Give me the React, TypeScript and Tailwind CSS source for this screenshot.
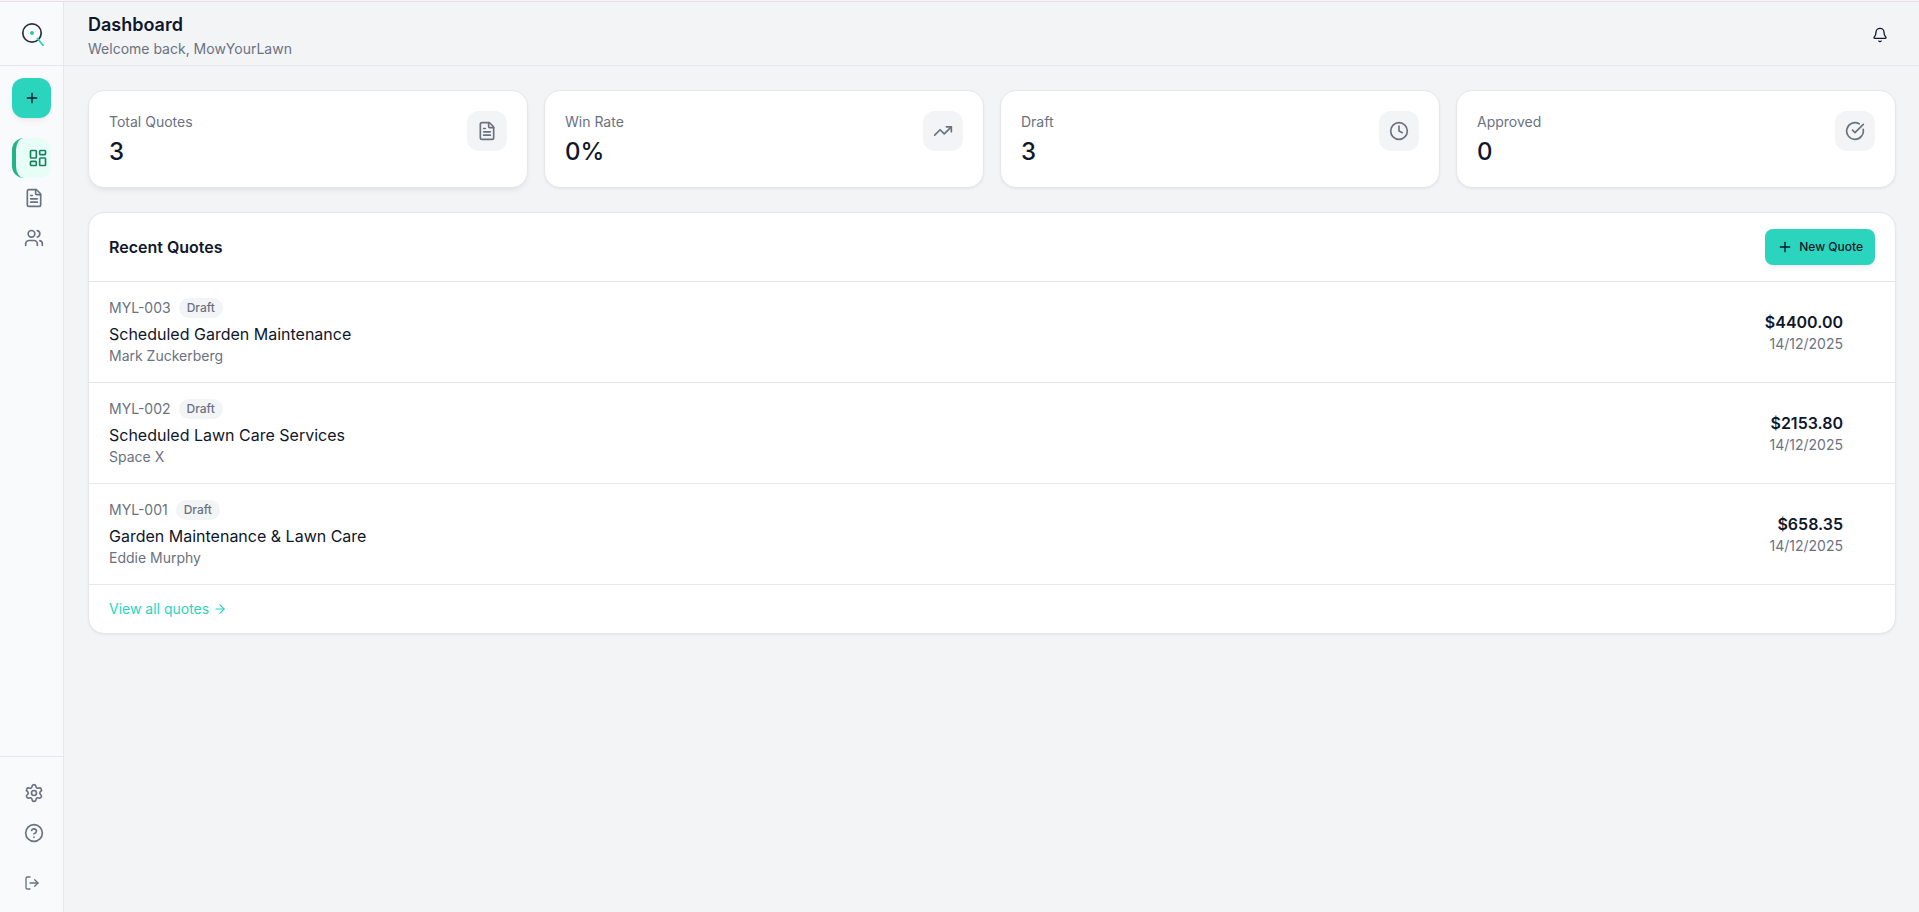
import React from 'react';
import {
  ArrowRight,
  Bell,
  CircleCheckBig,
  CircleHelp,
  Clock,
  FileText,
  LayoutDashboard,
  LogOut,
  Plus,
  Settings,
  TrendingUp,
  Users,
} from 'lucide-react';

const stats = [
  { label: 'Total Quotes', value: '3', icon: FileText, raised: true },
  { label: 'Win Rate', value: '0%', icon: TrendingUp, raised: false },
  { label: 'Draft', value: '3', icon: Clock, raised: false },
  { label: 'Approved', value: '0', icon: CircleCheckBig, raised: false },
];

const quotes = [
  { id: 'MYL-003', title: 'Scheduled Garden Maintenance', client: 'Mark Zuckerberg', total: '$4400.00', date: '14/12/2025' },
  { id: 'MYL-002', title: 'Scheduled Lawn Care Services', client: 'Space X', total: '$2153.80', date: '14/12/2025' },
  { id: 'MYL-001', title: 'Garden Maintenance & Lawn Care', client: 'Eddie Murphy', total: '$658.35', date: '14/12/2025' },
];

const Logo = () => (
  <svg width="24" height="24" viewBox="0 0 24 24" fill="none">
    <circle cx="12" cy="11" r="9.2" stroke="#2b3245" strokeWidth="1.7" />
    <circle cx="12" cy="11" r="2" fill="#2bc8b0" />
    <path d="M17.5 16.5L23.3 23.6" stroke="#2bd4bd" strokeWidth="1.8" strokeLinecap="round" />
  </svg>
);

const Sidebar = () => (
  <aside className="flex w-16 shrink-0 flex-col border-r border-gray-200 bg-gray-50 text-gray-500">
    <div className="flex h-16 items-center justify-center border-b border-gray-200">
      <a href="#" aria-label="Home">
        <Logo />
      </a>
    </div>

    <div className="px-3 py-3">
      <button
        aria-label="New quote"
        className="flex h-10 w-full items-center justify-center rounded-xl bg-[#2bd4bd] text-slate-900 shadow-md shadow-black/5"
      >
        <Plus size={16} />
      </button>
    </div>

    <nav className="flex flex-1 flex-col px-3 pt-2">
      <a
        href="#dashboard"
        aria-label="Dashboard"
        className="flex h-10 items-center rounded-xl border-l-4 border-[#20b486] bg-[#e9fdf7] pl-3 text-[#12855f]"
      >
        <LayoutDashboard size={20} className="shrink-0" />
      </a>
      <a href="#quotes" aria-label="Quotes" className="flex h-10 items-center pl-3">
        <FileText size={20} className="shrink-0" />
      </a>
      <a href="#customers" aria-label="Customers" className="flex h-10 items-center pl-3">
        <Users size={20} className="shrink-0" />
      </a>
    </nav>

    <div className="flex flex-col border-t border-gray-200 px-3 pt-4 pb-[9px]">
      <a href="#settings" aria-label="Settings" className="flex h-10 items-center pl-3">
        <Settings size={20} className="shrink-0" />
      </a>
      <a href="#help" aria-label="Help" className="flex h-10 items-center pl-3">
        <CircleHelp size={20} className="shrink-0" />
      </a>
      <button aria-label="Log out" className="mt-2.5 flex h-10 items-center pl-3">
        <LogOut size={16} className="shrink-0" />
      </button>
    </div>
  </aside>
);

const Header = () => (
  <header className="flex h-16 items-center justify-between border-b border-gray-200 pt-0.5 pr-[23px] pl-6">
    <div>
      <h1 className="text-lg leading-7 font-semibold">Dashboard</h1>
      <p className="text-sm text-gray-500">Welcome back, MowYourLawn</p>
    </div>
    <button aria-label="Notifications" className="flex size-8 items-center justify-center rounded-lg">
      <Bell size={16} />
    </button>
  </header>
);

const StatCards = () => (
  <section className="grid grid-cols-4 gap-4">
    {stats.map(({ label, value, icon: Icon, raised }) => (
      <div
        key={label}
        className={`flex items-start justify-between rounded-2xl border border-gray-200 bg-white p-5 ${
          raised ? 'shadow-md shadow-black/5' : 'shadow-sm shadow-black/5'
        }`}
      >
        <div>
          <p className="text-sm leading-[22px] text-gray-500">{label}</p>
          <p className="mt-1 text-2xl leading-[30px] font-medium">{value}</p>
        </div>
        <div className="flex size-10 items-center justify-center rounded-xl bg-gray-100 text-gray-500">
          <Icon size={20} />
        </div>
      </div>
    ))}
  </section>
);

const RecentQuotes = () => (
  <section className="rounded-2xl border border-gray-200 bg-white shadow-sm shadow-black/5">
    <div className="flex items-center justify-between px-5 py-4">
      <h2 className="text-base font-semibold">Recent Quotes</h2>
      <button className="flex h-9 items-center gap-1.5 rounded-lg bg-[#2bd4bd] px-3 text-xs font-medium text-slate-900 shadow-md shadow-black/5">
        <Plus size={16} />
        New Quote
      </button>
    </div>

    <ul>
      {quotes.map((quote) => (
        <li key={quote.id} className="border-t border-gray-200">
          <a href={`#${quote.id}`} className="flex items-center justify-between py-4 pr-[52px] pl-5">
            <div>
              <div className="mb-1 flex items-center gap-2">
                <span className="text-sm text-gray-500">{quote.id}</span>
                <span className="rounded-full bg-gray-100 px-2 py-0.5 text-xs font-medium text-gray-500">Draft</span>
              </div>
              <p className="text-base">{quote.title}</p>
              <p className="text-sm text-gray-500">{quote.client}</p>
            </div>
            <div className="text-right">
              <p className="text-base font-semibold">{quote.total}</p>
              <p className="text-sm text-gray-500">{quote.date}</p>
            </div>
          </a>
        </li>
      ))}
    </ul>

    <div className="flex border-t border-gray-200 px-5 py-3.5">
      <a href="#quotes" className="flex items-center gap-1 text-sm text-[#2bd4bd]">
        View all quotes
        <ArrowRight size={14} />
      </a>
    </div>
  </section>
);

export default function App() {
  return (
    <div className="flex min-h-screen flex-col bg-gray-100 font-['Inter',sans-serif] text-slate-900">
      <div className="h-0.5 border-b border-[#e4dfe9] bg-[#fdf2f8]" />
      <div className="flex flex-1">
        <Sidebar />
        <div className="flex min-w-0 flex-1 flex-col">
          <Header />
          <main className="flex flex-col gap-6 py-6 pr-[23px] pl-6">
            <StatCards />
            <RecentQuotes />
          </main>
        </div>
      </div>
    </div>
  );
}
